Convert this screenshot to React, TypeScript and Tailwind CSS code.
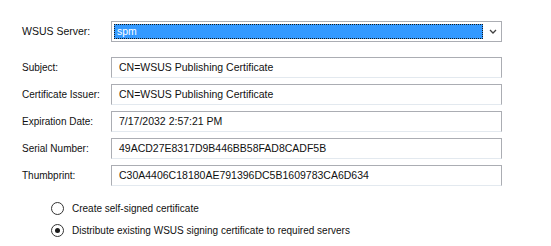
import React from 'react';

const fields = [
  { label: 'Subject:', value: 'CN=WSUS Publishing Certificate' },
  { label: 'Certificate Issuer:', value: 'CN=WSUS Publishing Certificate' },
  { label: 'Expiration Date:', value: '7/17/2032 2:57:21 PM' },
  { label: 'Serial Number:', value: '49ACD27E8317D9B446BB58FAD8CADF5B' },
  { label: 'Thumbprint:', value: 'C30A4406C18180AE791396DC5B1609783CA6D634' },
];

const Radio: React.FC<{ checked?: boolean; label: string }> = ({ checked, label }) => (
  <div className="flex h-[13px] items-center gap-[8px]">
    <span className="flex h-[13px] w-[13px] items-center justify-center rounded-full border border-[#333333] bg-white">
      {checked && <span className="h-[5px] w-[5px] rounded-full bg-[#1a1a1a]" />}
    </span>
    <span>{label}</span>
  </div>
);

export default function App() {
  return (
    <div
      className="h-[246px] w-[551px] bg-white pl-[22px] pt-[21px] text-[10px] leading-none text-[#111111]"
      style={{ fontFamily: '"Liberation Sans", Arial, sans-serif' }}
    >
      <div className="flex items-center">
        <span className="w-[89px] text-[10.5px]">WSUS Server:</span>
        <div className="flex h-[21px] w-[391px] border border-[#abadb3] bg-white p-[2px] pr-0">
          <div className="flex flex-1 items-center border border-dotted border-[#1a1a1a] bg-[#3399ff] pl-[2px] text-[10.5px] text-white">
            spm
          </div>
          <div className="ml-[1px] flex w-[17px] items-center justify-center">
            <svg width="8" height="5" viewBox="0 0 8 5">
              <path d="M1 1 L4 4 L7 1" fill="none" stroke="#404040" strokeWidth="1.3" />
            </svg>
          </div>
        </div>
      </div>

      <div className="mt-[15px] flex flex-col gap-[6px]">
        {fields.map((f) => (
          <div key={f.label} className="flex items-center">
            <span className="w-[89px]">{f.label}</span>
            <div className="flex h-[21px] w-[391px] items-center border border-[#abadb3] border-b-[#e3e9ef] bg-white pl-[7px] text-[10.5px]">
              {f.value}
            </div>
          </div>
        ))}
      </div>

      <div className="ml-[29px] mt-[16px] flex flex-col gap-[9px]">
        <Radio label="Create self-signed certificate" />
        <Radio checked label="Distribute existing WSUS signing certificate to required servers" />
      </div>
    </div>
  );
}
